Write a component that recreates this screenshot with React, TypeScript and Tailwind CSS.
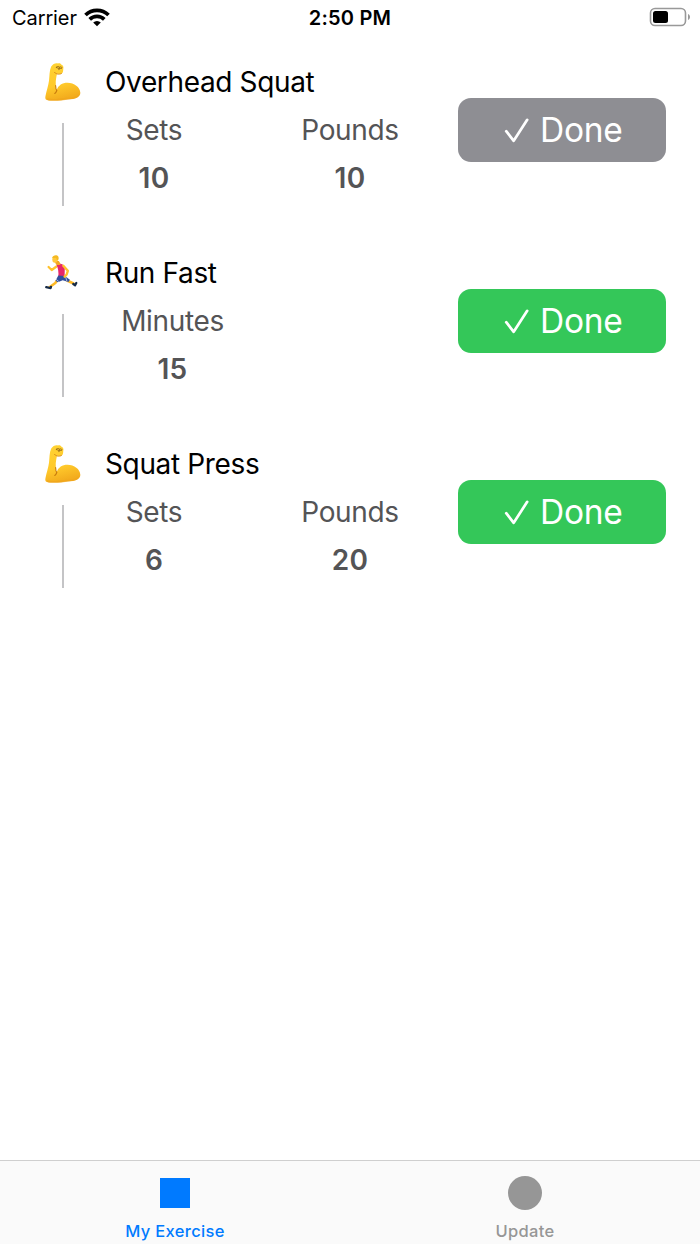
type Metric = { label: string; value: number; width: string };

type Exercise = {
  name: string;
  kind: "lift" | "run";
  done: boolean;
  metrics: Metric[];
};

const sets = (value: number): Metric => ({ label: "Sets", value, width: "w-[96px]" });
const pounds = (value: number): Metric => ({ label: "Pounds", value, width: "w-[96px]" });

const exercises: Exercise[] = [
  { name: "Overhead Squat", kind: "lift", done: true, metrics: [sets(10), pounds(10)] },
  { name: "Run Fast", kind: "run", done: false, metrics: [{ label: "Minutes", value: 15, width: "w-[133px]" }] },
  { name: "Squat Press", kind: "lift", done: false, metrics: [sets(6), pounds(20)] },
];

function Biceps() {
  return (
    <svg viewBox="0 0 36 40" className="h-10 w-9" aria-hidden="true">
      <defs>
        <linearGradient id="skin" x1="0" y1="0" x2="0.25" y2="1">
          <stop offset="0" stopColor="#ffd333" />
          <stop offset="0.65" stopColor="#ffc92b" />
          <stop offset="1" stopColor="#f3ad1e" />
        </linearGradient>
      </defs>
      <path
        d="M6.2 4.6C7.8 2 10.7.8 13 1.5c1.400-.7 3 .1 3.500 1.200 1.300.4 2 1.500 1.900 2.900l-.3 3.500c-.2 1.800-1.200 2.900-2.900 2.800l-3.200-.1c-.7 3.400-1.500 7.200-1.200 10.200.1 2.400-.3 5.200 1 5.900 1.500-4.500 5.500-7.100 10.600-7.100 7 0 12.500 4.500 12.900 9.600.3 4-3.900 6.400-9.100 6.700-4.600.3-8.600 1.200-13.300 1.400-4.500.2-8.300.2-11-.5-1.700-.4-1.800-2.100-1.400-4C1.600 28.700 3.300 24 4 18.800 4.600 14 4.300 8.700 6.200 4.600z"
        fill="url(#skin)"
      />
      <path d="M2 36.300c4 1.200 9 .8 13.500.2 5-.8 13.500-.7 18.700-4-.7 3.100-4.500 4.700-9.800 5-7.400.8-15.500 2-21.200.9-1-.2-1.600-1-1.200-2.100z" fill="#efa51c" opacity=".65" />
      <path d="M10.600 23.500c.1 2.300.2 4.100 1.200 5-.4 1.100-1 2.300-2 3" fill="none" stroke="#c77a0c" strokeWidth="1.100" strokeLinecap="round" />
      <path d="M11.200 5.200c1.500-1.100 2.700-.8 3.200.1 1-.7 2.100-.5 2.700.3M11.400 5.500c1.300 0 1.700 1.300 2.700 1.300s1.500-.7 2.400-.5M14.300 5.200l-.4 2.500" fill="none" stroke="#8a5f15" strokeWidth=".8" strokeLinecap="round" />
      <path d="M9.500 10.500l2.400 1.400c1.500.4 3.500.3 4.500-.3" fill="none" stroke="#dc9119" strokeWidth="1" strokeLinecap="round" />
    </svg>
  );
}

function Runner() {
  return (
    <svg viewBox="0 0 36 40" className="h-10 w-9" aria-hidden="true">
      <g fill="none" strokeLinecap="round" strokeLinejoin="round">
        <path d="M12 27.500L10.300 30 4.500 34.200M22 27.500l6.500 3" stroke="#ffb924" strokeWidth="2.500" />
        <path d="M11.500 13.500L6.700 17 3.600 14" stroke="#ffc12d" strokeWidth="2.300" />
      </g>
      <path d="M11.500 11.800c2-1.200 4.500-1.300 6.200-.3l2.100 2.700-.2 9-6.300.3c.6-4-.3-8.500-1.800-11.700z" fill="#e62769" />
      <path d="M13.300 22.500l6.600.4 5 3.800-1.500 2.400-5.700-1.800-4.900 2-2.300-1.600z" fill="#314f9d" />
      <path d="M11.200 26.400l2.600 2.100M20.500 23.500l1.400 4.800" stroke="#d5dcee" strokeWidth=".8" />
      <g fill="none" strokeLinecap="round" strokeLinejoin="round">
        <path d="M18.300 12.800l4.500 5-1.100 3.700-2.100 2.200" stroke="#ffc12d" strokeWidth="2.400" />
        <path d="M1.200 34.200l4.400.9.400-1.200M28.300 31l1.800 1.300 1.200-2.400" stroke="#172b47" strokeWidth="2.200" />
      </g>
      <path d="M9.500 8h4.400l1.800 3.200c-1.700 1.200-3.400 1-4.700.2z" fill="#f4a622" />
      <ellipse cx="9.800" cy="6.500" rx="2.500" ry="3.300" fill="#ffc83b" />
      <path d="M7.100 4.800C7.900 2 12 1.400 13.300 3.600c.9 1.900.1 3.700-1.100 4.500-.3-1.300-.7-2.300-1.200-3.400-1.500.4-2.900.3-3.900.1z" fill="#f5b921" />
    </svg>
  );
}

function DoneButton({ done }: { done: boolean }) {
  return (
    <button
      className={`mt-[39.500px] flex h-[64.300px] w-[208px] shrink-0 items-center rounded-[13px] pl-[46px] text-white ${done ? "bg-[#8e8e93]" : "bg-[#34c759]"}`}
    >
      <svg viewBox="0 0 26 28" className="h-7 w-[26px]" fill="none" stroke="currentColor" strokeWidth="2.700" strokeLinecap="round" strokeLinejoin="round" aria-hidden="true">
        <path d="M2.200 15.200l7.500 9.600L23.200 3.800" />
      </svg>
      <span className="mt-[2px] ml-[10px] text-[33.500px] leading-none tracking-[-0.300px]">Done</span>
    </button>
  );
}

function ExerciseRow({ exercise }: { exercise: Exercise }) {
  return (
    <li className="flex h-[191px] pr-[34px] pl-[45px]">
      <div className="flex w-[61px] shrink-0 flex-col">
        <div className="mt-[3.500px] h-10">{exercise.kind === "lift" ? <Biceps /> : <Runner />}</div>
        <div className="mt-[21.500px] ml-[17px] h-[83px] w-[1.500px] bg-[#c4c4c6]" />
      </div>
      <div className="flex flex-1 flex-col text-[28px] leading-[48px] whitespace-nowrap">
        <h2 className="-ml-px tracking-[-0.360px]">{exercise.name}</h2>
        <div className="flex gap-[100px] text-[#545456]">
          {exercise.metrics.map((m) => (
            <div key={m.label} className={`flex flex-col items-center ${m.width}`}>
              <span className="tracking-[-0.350px]">{m.label}</span>
              <span className="font-semibold tracking-[0.300px]">{m.value}</span>
            </div>
          ))}
        </div>
      </div>
      <DoneButton done={exercise.done} />
    </li>
  );
}

function StatusBar() {
  return (
    <header className="grid h-9 grid-cols-3 items-center px-[9px] text-[20px] leading-none">
      <div className="flex items-center gap-[7px] pl-[3px]">
        <span className="tracking-[-0.100px]">Carrier</span>
        <svg viewBox="0 0 26 20" className="mb-[2px] h-5 w-[26px]" aria-hidden="true">
          <g fill="none" stroke="#000" strokeWidth="3.700">
            <path d="M1.500 8a16.400 16.400 0 0 1 23 0" />
            <path d="M5.700 12.400a10.400 10.400 0 0 1 14.600 0" />
          </g>
          <path d="M13 19.300l-3.800-3.800a5.400 5.400 0 0 1 7.600 0z" />
        </svg>
      </div>
      <span className="text-center font-semibold tracking-[0.200px]">2:50 PM</span>
      <svg viewBox="0 0 42 20" className="mb-[2px] h-5 w-[42px] justify-self-end" aria-hidden="true">
        <rect x="1.500" y="1.500" width="35" height="17" rx="4.500" fill="none" stroke="#999" strokeWidth="1.600" />
        <rect x="4" y="4" width="15" height="12" rx="2.500" />
        <path d="M39 7c2.700 1.300 2.700 4.700 0 6z" fill="#999" />
      </svg>
    </header>
  );
}

export default function App() {
  return (
    <div className="flex h-[1244px] w-[700px] flex-col overflow-hidden bg-white font-['Inter','Liberation_Sans',sans-serif] text-black">
      <StatusBar />
      <main className="flex-1 pt-[22px]">
        <ul>
          {exercises.map((e) => (
            <ExerciseRow key={e.name} exercise={e} />
          ))}
        </ul>
      </main>
      <nav className="grid h-[84px] grid-cols-2 border-t border-[#cfcfcf] bg-[#fafafa] text-[16.500px] leading-none font-medium tracking-[0.330px]">
        <div className="flex flex-col items-center text-[#007aff]">
          <div className="mt-[17px] h-[30px] w-[30px] bg-current" />
          <span className="mt-[14.500px]">My Exercise</span>
        </div>
        <div className="flex flex-col items-center text-[#969696]">
          <div className="mt-[15px] h-[34px] w-[34px] rounded-full bg-current" />
          <span className="mt-[12.500px]">Update</span>
        </div>
      </nav>
    </div>
  );
}
